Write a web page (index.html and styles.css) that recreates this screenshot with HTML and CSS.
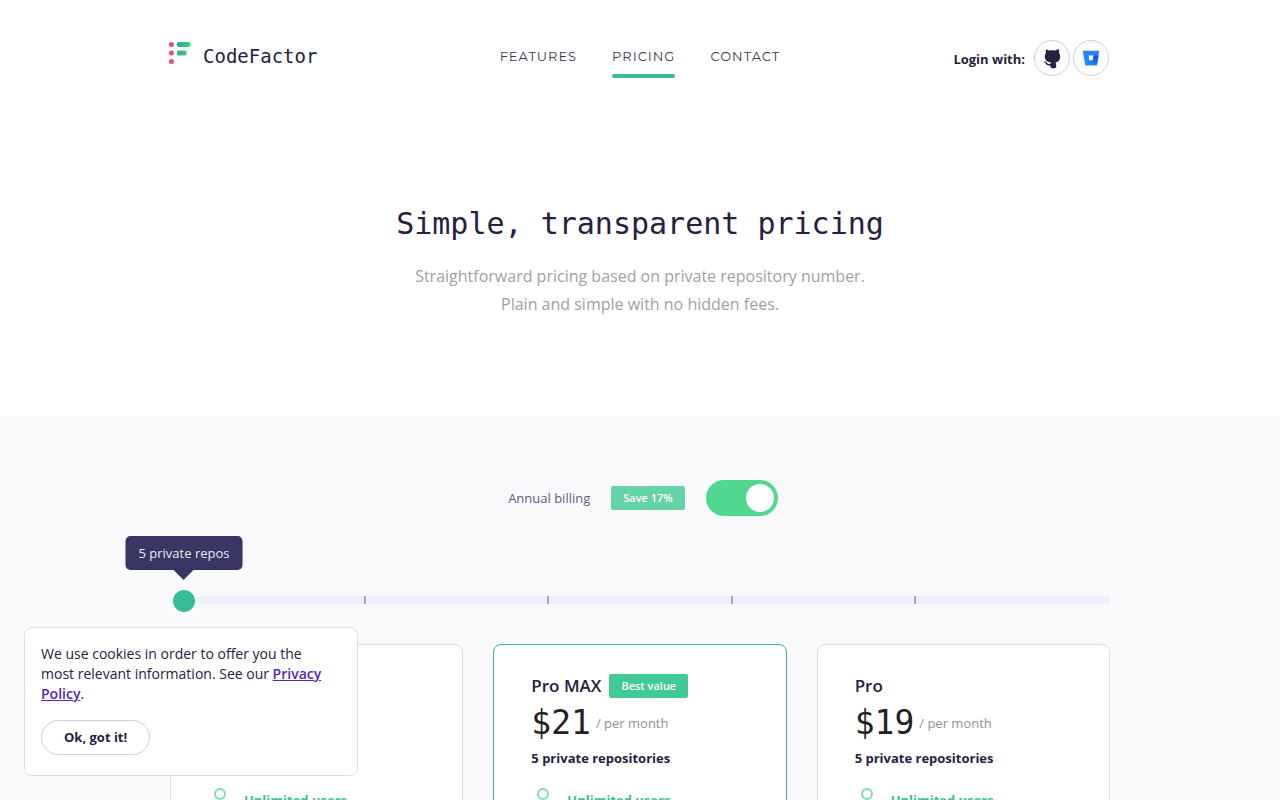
FILE: index.html
```html
<!DOCTYPE html>
<html lang="en">
<head>
<meta charset="utf-8">
<meta name="viewport" content="width=device-width, initial-scale=1">
<title>Pricing - CodeFactor</title>
<link rel="stylesheet" href="styles.css">
</head>
<body>
<header class="header container">
  <a class="logo" href="#">
    <svg class="logo-mark" viewBox="0 0 23 24" aria-hidden="true">
      <defs><linearGradient id="bar" x1="0" x2="1"><stop offset="0" stop-color="#24a69b"/><stop offset="1" stop-color="#49ce8e"/></linearGradient></defs>
      <g fill="#e6506e"><circle cx="3.4" cy="3.5" r="2.5"/><circle cx="3.4" cy="12" r="2.5"/><circle cx="3.4" cy="20.4" r="2.5"/></g>
      <rect x="8.8" y="1" width="13.8" height="5" rx="2.5" fill="url(#bar)"/>
      <rect x="8.8" y="9.5" width="10" height="5" rx="2.5" fill="url(#bar)"/>
    </svg>
    <span class="logo-name">CodeFactor</span>
  </a>
  <nav class="nav">
    <a href="#">FEATURES</a>
    <a class="active" href="#">PRICING</a>
    <a href="#">CONTACT</a>
  </nav>
  <div class="login">
    <span class="login-label">Login with:</span>
    <a class="login-link" href="#" aria-label="GitHub">
      <svg viewBox="0 0 36 36" aria-hidden="true"><path fill="#25213f" d="M11.2 9.2c1.4 0 2.7.7 3.7 1.4 2-.4 4.200-.4 6.200 0 1-.7 2.300-1.400 3.700-1.400.6 1.300.5 2.700.2 3.700 1 1.200 1.300 2.700 1.100 4.400-.3 3.300-2 4.700-4.800 5.200.7.8.9 1.700.9 2.900v2.200c-1.300 1.100-4.400 1.100-5.700 0v-2.100c-2.800.4-4.100-.7-4.900-2.200-.4-.7-.9-.9-1.400-1.300-.2-.6.2-.8.8-.7 1.700.3 1.900 2.500 3.600 2.700.8.100 1.400 0 1.900-.3.100-.5.300-.9.600-1.200-3.900-.4-6.100-2.200-6.300-5.600-.1-1.500.3-2.800 1.200-4-.4-1-.4-2.400.2-3.700z"/></svg>
    </a>
    <a class="login-link" href="#" aria-label="Bitbucket">
      <svg viewBox="0 0 36 36" aria-hidden="true">
        <defs><linearGradient id="bucket" x1="1" y1="0.2" x2="0.3" y2="0.9"><stop offset="0.1" stop-color="#0f56cc"/><stop offset="0.9" stop-color="#2684ff"/></linearGradient></defs>
        <path fill="#2684ff" d="M10.300 10.800h15.400q.6 0 .5.600l-2.200 13.400q-.1.500-.6.500H12.700q-.5 0-.6-.5l-2.200-13.400q-.1-.6.400-.6zm5.200 4.700.9 4.900h3.300l.9-4.900z"/>
        <path fill="url(#bucket)" d="M25.500 15.500h-4.900l-.9 4.900h-3.300l-4 4.700q.2.200.5.200h10.500q.5 0 .6-.5z"/>
      </svg>
    </a>
  </div>
</header>
<main>
  <section class="hero">
    <h1>Simple, transparent pricing</h1>
    <p>Straightforward pricing based on private repository number.<br>Plain and simple with no hidden fees.</p>
  </section>
  <section class="pricing">
    <div class="container">
      <div class="billing">
        <label for="annual">Annual billing</label>
        <span class="badge badge-soft">Save 17%</span>
        <input class="switch" id="annual" type="checkbox" checked>
      </div>
      <div class="slider">
        <input class="range" type="range" min="0" max="5" value="0" aria-label="Private repositories">
        <div class="ticks" aria-hidden="true"><span></span><span></span><span></span><span></span></div>
        <output class="tooltip">5 private repos</output>
      </div>
      <div class="plans">
        <article class="plan">
          <ul><li>Unlimited users</li></ul>
        </article>
        <article class="plan plan-best">
          <h2>Pro MAX <span class="badge">Best value</span></h2>
          <div class="price"><strong>$21</strong><span>/ per month</span></div>
          <p class="repos">5 private repositories</p>
          <ul><li>Unlimited users</li></ul>
        </article>
        <article class="plan">
          <h2>Pro</h2>
          <div class="price"><strong>$19</strong><span>/ per month</span></div>
          <p class="repos">5 private repositories</p>
          <ul><li>Unlimited users</li></ul>
        </article>
      </div>
    </div>
  </section>
</main>
<aside class="cookies">
  <p>We use cookies in order to offer you the most relevant information. See our <a href="#">Privacy Policy</a>.</p>
  <button type="button">Ok, got it!</button>
</aside>
</body>
</html>
```

FILE: styles.css
```css
*, *::before, *::after { box-sizing: border-box; }
body {
  margin: 0;
  color: #25213f;
  background: #fff;
  font: 13px/20px "Open Sans", "Noto Sans", sans-serif;
}
h1, h2, p, ul { margin: 0; padding: 0; }
.container { max-width: 940px; margin: 0 auto; }

.header {
  display: grid;
  grid-template-columns: 1fr auto 1fr;
  align-items: start;
  padding-top: 40px;
}
.logo {
  display: flex;
  gap: 12px;
  color: inherit;
  text-decoration: none;
}
.logo-mark { width: 23px; height: 24px; margin: 1px 0 0 -2px; }
.logo-name { font: 19px/32px "DejaVu Sans Mono", monospace; }
.nav { display: flex; gap: 35px; }
.nav a {
  position: relative;
  padding: 6px 0 12px;
  color: #3b3654;
  font: 13px/20px Montserrat, Inter, sans-serif;
  letter-spacing: 1px;
  text-decoration: none;
}
.nav .active::after {
  content: "";
  position: absolute;
  left: 0;
  right: 0;
  bottom: 0;
  height: 4px;
  border-radius: 2px;
  background: #35bd97;
}
.login { display: flex; justify-content: flex-end; gap: 3px; padding-right: 1px; }
.login-label { margin-right: 6px; font-weight: 700; line-height: 38px; }
.login-link {
  width: 36px;
  height: 36px;
  border: 1px solid #cfcfd8;
  border-radius: 50%;
}
.login-link svg { display: block; margin: -1px; width: 36px; height: 36px; }

.hero { padding: 126px 20px 98px; text-align: center; }
h1 { font: 30px/40px "DejaVu Sans Mono", monospace; }
.hero p { margin-top: 18px; color: #a0a0a3; font-size: 16px; line-height: 28px; }

.pricing { padding: 64px 0; background: #fafafd; }
.billing {
  display: flex;
  align-items: center;
  justify-content: center;
  gap: 21px;
  padding-left: 6px;
  color: #605c78;
}
.badge {
  display: inline-block;
  padding: 0 12px;
  border-radius: 2px;
  background: #42ca96;
  color: #fff;
  font-size: 11px;
  font-weight: 600;
  line-height: 24px;
}
.badge-soft { background: #67d2a8; }
.switch {
  appearance: none;
  display: flex;
  width: 72px;
  height: 36px;
  margin: 0;
  padding: 4px;
  border-radius: 18px;
  background: #c9c9d5;
}
.switch::before { content: ""; width: 28px; height: 28px; border-radius: 50%; background: #fff; }
.switch:checked { justify-content: flex-end; background: #50d890; }

.slider { position: relative; display: grid; align-items: center; margin-top: 70px; }
.range, .ticks { grid-area: 1 / 1; }
.range { appearance: none; width: 100%; height: 28px; margin: 0; background: none; }
.range::-webkit-slider-runnable-track { height: 8px; border-radius: 3px; background: #efeefb; }
.range::-webkit-slider-thumb {
  appearance: none;
  width: 28px;
  height: 28px;
  margin-top: -9px;
  border: 3px solid #fff;
  border-radius: 50%;
  background: #35bd97;
}
.ticks { display: flex; justify-content: space-between; padding: 0 20.6%; pointer-events: none; }
.ticks span { width: 2px; height: 8px; background: #aaa8bd; }
.tooltip {
  position: absolute;
  left: 14px;
  bottom: 44px;
  padding: 7px 13px;
  border-radius: 5px;
  background: #393663;
  color: #e9e8f6;
  white-space: nowrap;
  transform: translateX(-50%);
}
.tooltip::after {
  content: "";
  position: absolute;
  top: 100%;
  left: 50%;
  margin-left: -10px;
  border: 10px solid transparent;
  border-top-color: #393663;
  border-bottom: 0;
}

.plans { display: grid; grid-template-columns: repeat(3, 1fr); gap: 30px; margin-top: 30px; }
.plan {
  display: flex;
  flex-direction: column;
  padding: 29px 37px 40px;
  border: 1px solid #dcdce6;
  border-radius: 8px;
  background: #fff;
}
.plan-best { border-color: #45b592; }
h2 { display: flex; align-items: center; gap: 8px; font-size: 17px; font-weight: 600; line-height: 24px; }
.price { display: flex; align-items: center; gap: 5px; height: 50px; color: #92909d; }
.price strong { color: #222; font: 33px/40px "DejaVu Sans Mono", monospace; }
.repos { font-weight: 700; }
.plan ul { margin-top: auto; padding-top: 20px; list-style: none; }
.plan li { display: flex; gap: 18px; padding-left: 6px; color: #3dbd95; font-weight: 700; line-height: 24px; }
.plan li::before { content: ""; width: 12px; height: 12px; border: 2px solid #7edbc2; border-radius: 50%; }

.cookies {
  position: fixed;
  left: 24px;
  bottom: 24px;
  width: 334px;
  padding: 16px;
  border: 1px solid #dcdce6;
  border-radius: 8px;
  background: #fff;
  font-size: 14px;
}
.cookies p { padding-right: 8px; }
.cookies a { color: #5226b8; font-weight: 600; }
.cookies button {
  display: block;
  margin: 16px 0 4px;
  padding: 7px 22px;
  border: 1px solid #cfcfd8;
  border-radius: 18px;
  background: #fff;
  color: #25213f;
  font: bold 13px/19px "Open Sans", sans-serif;
}
```
